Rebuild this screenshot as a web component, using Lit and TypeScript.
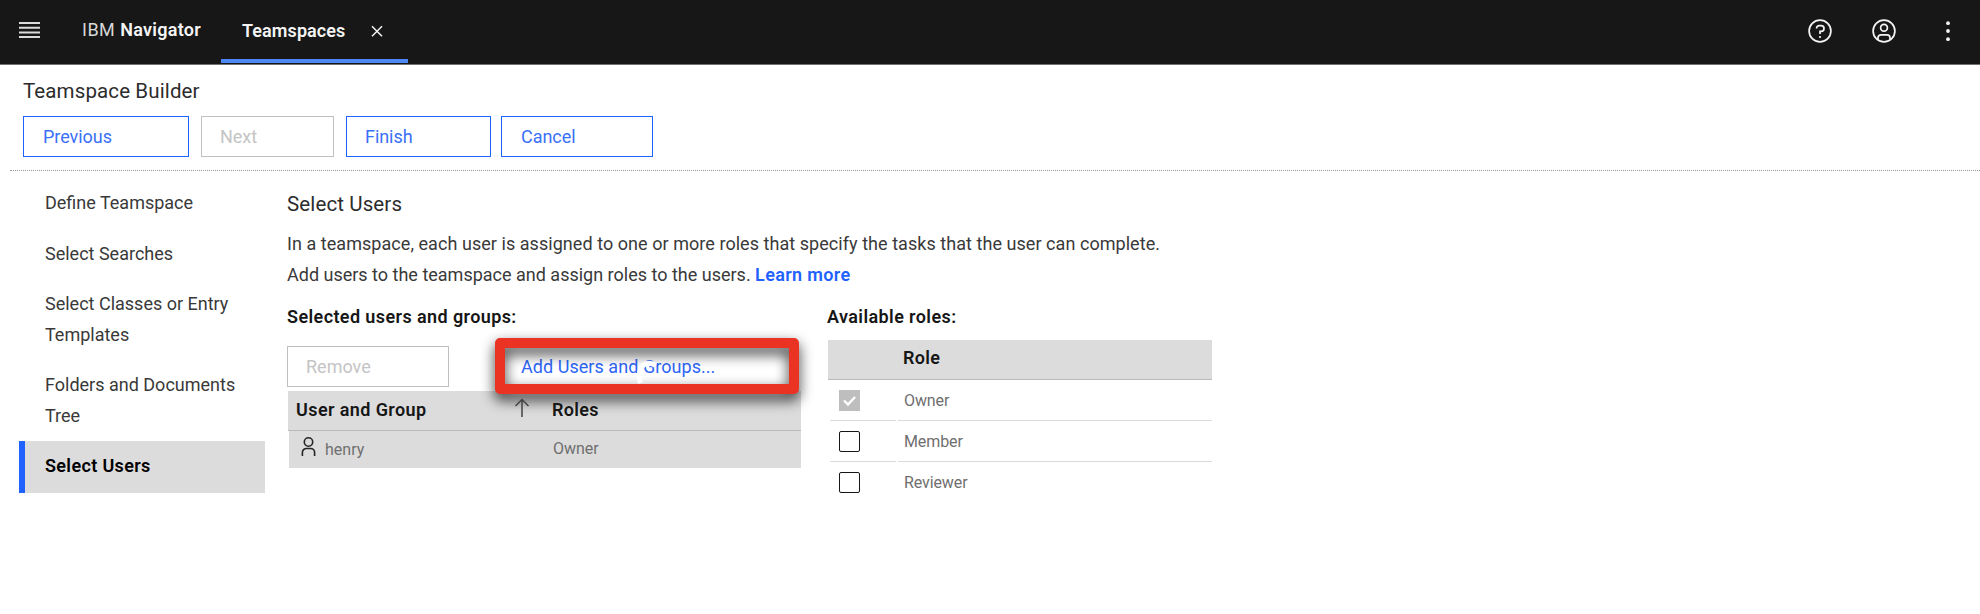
import { LitElement, html, css } from "lit";
import { customElement, state } from "lit/decorators.js";
import { classMap } from "lit/directives/class-map.js";

const steps = [
  "Define Teamspace",
  "Select Searches",
  "Select Classes or Entry Templates",
  "Folders and Documents Tree",
  "Select Users",
];

@customElement("ts-header")
class TsHeader extends LitElement {
  static styles = css`
    :host {
      display: flex;
      box-sizing: border-box;
      height: 65px;
      background: #171717;
      border-bottom: 1px solid #727272;
      color: #f4f4f4;
      font-size: 18px;
      line-height: 24px;
    }
    svg { display: block; fill: none; stroke: #f4f4f4; }
    .menu { margin: 20.5px 0 0 19px; stroke: #dcdcdc; }
    .brand { width: 139px; margin: 18px 0 0 41px; white-space: pre; }
    b { font-weight: 600; letter-spacing: 0.25px; }
    .light { color: #d8d8d8; font-weight: 400; letter-spacing: 0.5px; }
    .tab {
      display: flex;
      box-sizing: border-box;
      width: 187px;
      height: 63px;
      padding: 19px 0 0 21px;
      border-bottom: 4px solid #4b87f5;
    }
    .tab b { width: 129px; letter-spacing: 0.08px; }
    .close { margin-top: 6px; }
    .actions { display: flex; gap: 40px; margin: 19px 20px 0 auto; }
  `;
  render() {
    return html`
      <svg class="menu" width="22" height="18" stroke-width="2">
        <path d="M0 2h21M0 6.7h21M0 11.4h21M0 16h21" />
      </svg>
      <div class="brand"><span class="light">IBM </span><b>Navigator</b></div>
      <div class="tab">
        <b>Teamspaces</b>
        <svg class="close" width="13" height="13" stroke-width="1.5">
          <path d="M1 1.2l10 10M11 1.2l-10 10" />
        </svg>
      </div>
      <div class="actions">
        <svg width="24" height="24" stroke-width="1.7">
          <circle cx="12" cy="12" r="10.9" />
          <path d="M8.6 9.6V9.2A2.6 2.6 0 0 1 11.2 6.6h1.9a2.9 2.9 0 0 1 0 5.8H12v2.7" />
          <circle cx="12" cy="18" r="1.1" fill="#f4f4f4" stroke="none" />
        </svg>
        <svg width="24" height="24" stroke-width="1.7">
          <circle cx="12" cy="12" r="10.9" />
          <circle cx="12" cy="8.8" r="3.4" />
          <path d="M6 20.8v-2a3 3 0 0 1 3-3h6a3 3 0 0 1 3 3v2" />
        </svg>
        <svg width="24" height="24">
          <g fill="#f4f4f4" stroke="none">
            <circle cx="12" cy="4.2" r="1.9" />
            <circle cx="12" cy="12" r="1.9" />
            <circle cx="12" cy="20.2" r="1.9" />
          </g>
        </svg>
      </div>
    `;
  }
}

@customElement("ts-steps")
class TsSteps extends LitElement {
  static styles = css`
    :host { display: block; width: 246px; font-size: 18px; line-height: 30.7px; color: #393939; }
    .step { padding: 9.8px 20px 9.8px 20px; border-left: 6px solid transparent; }
    .step:first-child { padding-bottom: 10.5px; }
    .active {
      margin-top: -0.6px;
      padding: 10.4px 20px 11.2px;
      background: #dcdcdc;
      border-color: #1f62fe;
      color: #000;
      font-weight: 600;
      letter-spacing: 0.35px;
    }
  `;
  render() {
    return steps.map(
      (s, i) => html`<div class=${classMap({ step: true, active: i === steps.length - 1 })}>${s}</div>`
    );
  }
}

@customElement("ts-users")
class TsUsers extends LitElement {
  static styles = css`
    :host { display: block; width: 514px; }
    .bar { display: flex; align-items: flex-start; position: relative; height: 45px; }
    .remove {
      box-sizing: border-box;
      width: 162px;
      height: 41px;
      padding-left: 18px;
      border: 1px solid #bfbfbf;
      color: #c4c4c4;
      font-size: 18px;
      line-height: 40px;
    }
    .callout {
      position: absolute;
      left: 208px;
      top: -8px;
      box-sizing: border-box;
      width: 304px;
      height: 56px;
      z-index: 1;
    }
    .fill {
      box-sizing: border-box;
      height: 36px;
      margin: 10px;
      padding-left: 16px;
      background: #fff;
      color: #2d66f6;
      font-size: 18px;
      line-height: 37px;
      letter-spacing: 0.05px;
    }
    .frame {
      position: absolute;
      inset: 0;
      border: 10px solid #ea3323;
      border-radius: 5px;
      filter: drop-shadow(0 6px 7px rgba(0, 0, 0, 0.8));
    }
    .spinner { position: absolute; left: 138px; top: 19px; }
    .head {
      display: flex;
      box-sizing: border-box;
      margin-left: 1px;
      height: 40px;
      padding-left: 8px;
      background: #dcdcdc;
      border-bottom: 1px solid #bababa;
      color: #161616;
      font-size: 18px;
      font-weight: 600;
      line-height: 38px;
    }
    .name { width: 218px; letter-spacing: 0.4px; }
    .roles { padding-left: 22px; letter-spacing: 0.3px; }
    .name, .arrow, .roles { position: relative; z-index: 2; }
    .row {
      display: flex;
      margin-left: 2px;
      height: 37px;
      background: #dcdcdc;
      color: #6f6f6f;
      font-size: 16px;
      line-height: 36px;
    }
    .person { margin: 5px 9px 0 12px; }
    .user { width: 228px; padding-top: 1px; box-sizing: border-box; height: 37px; }
    svg { display: block; fill: none; stroke: #262626; }
    .arrow { margin-top: 7px; stroke: #444; }
  `;
  render() {
    return html`
      <div class="bar">
        <div class="remove">Remove</div>
        <div class="callout">
          <div class="fill">Add Users and Groups...</div>
          <div class="frame"></div>
          <svg class="spinner" width="30" height="28">
            <path d="M7.500 26C4.500 15 8 6.500 16 6.300Q20 6.300 22.500 8.500" stroke="#fff" stroke-width="5" />
          </svg>
        </div>
      </div>
      <div class="head">
        <div class="name">User and Group</div>
        <svg class="arrow" width="16" height="20" stroke-width="1.5"><path d="M8 19V2M1.500 8L8 1.500 14.500 8" /></svg>
        <div class="roles">Roles</div>
      </div>
      <div class="row">
        <svg class="person" width="15" height="21" stroke-width="1.6">
          <circle cx="7.500" cy="6" r="4.200" />
          <path d="M1.400 20v-3.500a4 4 0 0 1 4-4h4.200a4 4 0 0 1 4 4V20" />
        </svg>
        <div class="user">henry</div>
        <div>Owner</div>
      </div>
    `;
  }
}

@customElement("ts-roles")
class TsRoles extends LitElement {
  static styles = css`
    :host { display: block; width: 384px; }
    .head {
      box-sizing: border-box;
      height: 40px;
      padding-left: 75px;
      background: #dcdcdc;
      border-bottom: 1px solid #bababa;
      color: #161616;
      font-size: 18px;
      font-weight: 600;
      letter-spacing: 0.3px;
      line-height: 36px;
    }
    .row {
      display: grid;
      grid-template-columns: 66px 1fr;
      column-gap: 2px;
      margin-left: 2px;
      height: 41px;
      color: #6f6f6f;
      font-size: 16px;
      line-height: 41px;
    }
    .cell { box-sizing: border-box; height: 41px; border-bottom: 1px solid #dadada; }
    .text { padding-left: 6px; letter-spacing: -0.1px; }
    .row:last-child .cell { border: 0; }
    .box {
      box-sizing: border-box;
      width: 21px;
      height: 21px;
      margin: 10px 0 0 9px;
      border: 1px solid #161616;
      border-radius: 2px;
    }
    .checked { background: #bebebe; border-color: #bebebe; border-radius: 0; }
    svg { display: block; fill: none; stroke: #fff; }
  `;
  @state() roles = [
    { name: "Owner", checked: true },
    { name: "Member", checked: false },
    { name: "Reviewer", checked: false },
  ];
  render() {
    return html`
      <div class="head">Role</div>
      ${this.roles.map(
        (r) => html`<div class="row">
          <div class="cell">
            <div class=${classMap({ box: true, checked: r.checked })}>
              ${r.checked
                ? html`<svg width="19" height="19" stroke-width="2.4"><path d="M4 9.500l4 4L15 6" /></svg>`
                : ""}
            </div>
          </div>
          <div class="cell text">${r.name}</div>
        </div>`
      )}
    `;
  }
}

@customElement("app-root")
class AppRoot extends LitElement {
  static styles = css`
    :host {
      display: block;
      height: 614px;
      overflow: hidden;
      background: #fff;
      color: #393939;
      font-family: Roboto, "Noto Sans", sans-serif;
      font-size: 18px;
    }
    .title { margin: 14px 0 0 23px; height: 37px; font-size: 20.5px; line-height: 25px; letter-spacing: 0.12px; color: #2c2c2c; }
    .buttons { display: flex; margin-left: 23px; height: 54px; }
    .btn {
      box-sizing: border-box;
      height: 41px;
      padding-left: 19px;
      border: 1px solid #1f62fe;
      color: #3a70f7;
      line-height: 40px;
      letter-spacing: -0.05px;
    }
    .previous { width: 166px; margin-right: 12px; }
    .next { width: 133px; margin-right: 12px; border-color: #bfbfbf; color: #c4c4c4; padding-left: 18px; }
    .finish { width: 145px; margin-right: 10px; padding-left: 18px; }
    .cancel { width: 152px; }
    .rule { margin-left: 10px; border-top: 1px dotted #999; }
    .body { display: flex; padding-left: 19px; }
    .steps { margin-top: 7.3px; }
    .main { margin: 21px 0 0 22px; }
    .subtitle { height: 36px; font-size: 20.5px; line-height: 25px; letter-spacing: 0.12px; color: #2c2c2c; }
    .intro { line-height: 31px; letter-spacing: 0.05px; height: 77px; }
    .add { letter-spacing: 0; }
    .learn { color: #1f62fe; font-weight: 600; letter-spacing: 0.35px; }
    .panes { display: flex; gap: 26px; }
    .label { color: #161616; font-weight: 600; line-height: 24px; letter-spacing: 0.4px; }
    .roles-label { margin-bottom: 11px; }
    .users-label { margin-bottom: 17px; }
    .roles { margin-left: 1px; }
  `;
  render() {
    return html`
      <ts-header></ts-header>
      <div class="title">Teamspace Builder</div>
      <div class="buttons">
        <div class="btn previous">Previous</div>
        <div class="btn next">Next</div>
        <div class="btn finish">Finish</div>
        <div class="btn cancel">Cancel</div>
      </div>
      <div class="rule"></div>
      <div class="body">
        <ts-steps class="steps"></ts-steps>
        <div class="main">
          <div class="subtitle">Select Users</div>
          <div class="intro">
            <div>In a teamspace, each user is assigned to one or more roles that specify the tasks that the user can complete.</div>
            <div class="add">Add users to the teamspace and assign roles to the users. <span class="learn">Learn more</span></div>
          </div>
          <div class="panes">
            <div>
              <div class="label users-label">Selected users and groups:</div>
              <ts-users></ts-users>
            </div>
            <div>
              <div class="label roles-label">Available roles:</div>
              <ts-roles class="roles"></ts-roles>
            </div>
          </div>
        </div>
      </div>
    `;
  }
}
